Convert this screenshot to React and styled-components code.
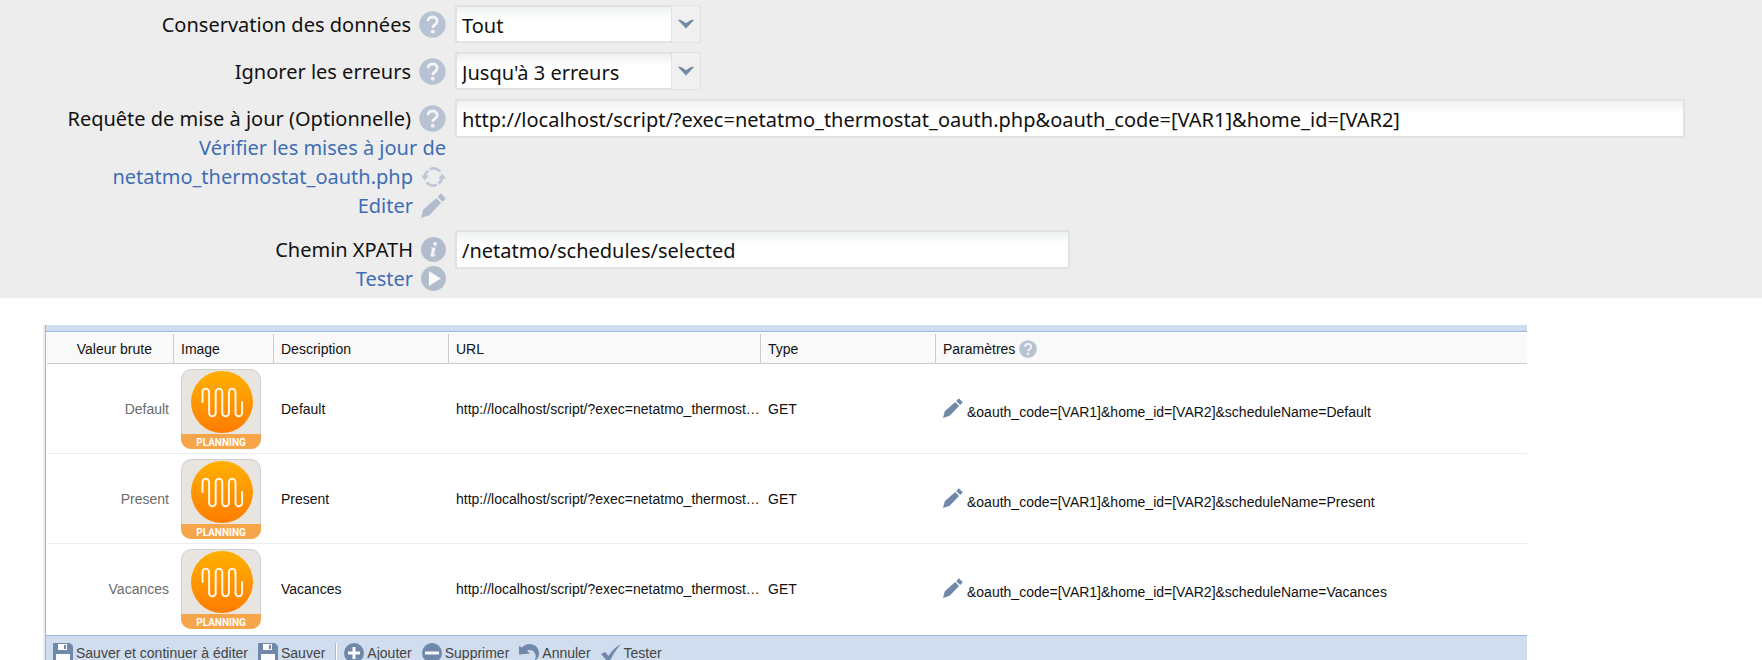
import React from "react";
import styled, { createGlobalStyle } from "styled-components";

const GlobalStyle = createGlobalStyle`
  * {
    box-sizing: border-box;
  }

  body {
    margin: 0;
    background: #fff;
  }
`;

const Page = styled.main`
  height: 100vh;
  overflow: hidden;
`;

const Settings = styled.form`
  display: grid;
  grid-template-columns: 446px 1fr;
  column-gap: 9px;
  row-gap: 9px;
  align-items: start;
  padding: 5px 77px 4px 0;
  background: #ededed;
  color: #111;
  font-family: "Noto Sans", Tahoma, sans-serif;
  font-size: 20px;
  line-height: 29px;
`;

const LabelCell = styled.div`
  display: flex;
  flex-direction: column;
  align-items: flex-end;
  padding: 5px 0 1px;
  text-align: right;
`;

const LabelLine = styled.div`
  display: flex;
  align-items: center;
  gap: 8px;
`;

const ActionLink = styled.a`
  display: flex;
  align-items: center;
  gap: 8px;
  color: #3f6db5;
  text-decoration: none;
`;

const ActionBlock = styled.a`
  display: flex;
  flex-direction: column;
  align-items: flex-end;
  color: #3f6db5;
  text-decoration: none;
`;

const TextInput = styled.input`
  width: ${(props) => (props.$half ? "50%" : "100%")};
  height: 39px;
  padding: 2px 5px 0;
  border: 2px solid #e0e2e3;
  border-radius: 0;
  background: linear-gradient(#eef1f1, #fff 12px);
  color: #111;
  font: inherit;
  outline: none;
`;

const SelectBox = styled.div`
  display: grid;
  width: 246px;
  height: 38px;

  & > * {
    grid-area: 1 / 1;
  }
`;

const Select = styled.select`
  appearance: none;
  width: 100%;
  height: 38px;
  padding: 2px 34px 0 5px;
  border: 2px solid #e0e2e3;
  border-radius: 0 4px 0 0;
  background: linear-gradient(#eef1f1, #fff 12px);
  color: #111;
  font: inherit;
  outline: none;
`;

const Arrow = styled.span`
  display: flex;
  justify-content: center;
  justify-self: end;
  width: 30px;
  padding-top: 13px;
  border: 1px solid #dfe1e3;
  border-radius: 0 4px 0 0;
  background: #f0f0f0;
  pointer-events: none;
`;

const Panel = styled.section`
  margin: 27px 235px 0 43px;
  border-left: 2px solid #ececec;
  font-family: "Liberation Sans", Arial, sans-serif;
  font-size: 14px;
  line-height: 18px;
`;

const PanelBody = styled.div`
  border-left: 1px solid #99b8e4;
`;

const Band = styled.div`
  height: 7px;
  border-bottom: 1px solid #99b8e4;
  background: #d0ddee;
`;

const Table = styled.table`
  width: 100%;
  padding: 2px 0 1px 1px;
  border-collapse: separate;
  border-spacing: 0;
  table-layout: fixed;
  color: #111;
`;

const HeadCell = styled.th`
  width: ${(props) => (props.$width ? `${props.$width}px` : "auto")};
  height: 30px;
  padding: 0 ${(props) => (props.$align ? 21 : 0)}px 0 7px;
  border-right: ${(props) => (props.$width ? "1px solid #ccc" : "none")};
  border-bottom: 1px solid #ccc;
  background: #f9f9f9;
  font-weight: normal;
  text-align: ${(props) => props.$align || "left"};
`;

const HeadLabel = styled.span`
  display: flex;
  align-items: center;
  gap: 4px;
`;

const Cell = styled.td`
  height: 90px;
  padding: 0 0 0 7px;
  border-bottom: 1px solid #ededed;
  white-space: nowrap;

  tr:last-child > & {
    border-bottom-color: #fff;
  }
`;

const RawCell = styled(Cell)`
  padding-right: 5px;
  color: #6c6c6c;
  text-align: right;
`;

const ImageCell = styled(Cell)`
  & svg {
    display: block;
  }
`;

const Params = styled.div`
  display: flex;
  align-items: flex-end;
  gap: 4px;
  padding-top: 2px;
`;

const EditButton = styled.button`
  display: flex;
  padding: 0 0 3px;
  border: 0;
  background: none;
  cursor: pointer;
`;

const Toolbar = styled.div`
  display: flex;
  align-items: flex-start;
  gap: 10px;
  height: 36px;
  padding: 7px 7px 0;
  border-top: 1px solid #99b8e4;
  background: #d0ddee;
`;

const ToolButton = styled.button`
  display: flex;
  align-items: center;
  gap: 3px;
  padding: 0;
  border: 0;
  background: none;
  color: #444;
  font: inherit;
  cursor: pointer;
`;

const Separator = styled.span`
  width: 2px;
  height: 22px;
  margin-right: -3px;
  border-left: 1px solid #98c0f0;
  border-right: 1px solid #fff;
`;

const MUTED = "#b1bccd";
const STEEL = "#7088a9";

const HelpIcon = ({ size = 27 }) => (
  <svg width={size} height={size} viewBox="0 0 27 27">
    <circle cx="13.5" cy="13.5" r="13.2" fill="#b7c2d3" />
    <path
      d="M9 10.2C9 7.6 11 6 13.6 6s4.6 1.5 4.6 3.9c0 2.1-1.3 3-2.6 4-1.1.8-1.7 1.4-1.7 3"
      fill="none"
      stroke="#f2f4f7"
      strokeWidth="2.8"
    />
    <circle cx="13.8" cy="20.7" r="1.9" fill="#f2f4f7" />
  </svg>
);

const InfoIcon = () => (
  <svg width="25" height="25" viewBox="0 0 27 27">
    <circle cx="13.5" cy="13.5" r="13.5" fill={MUTED} />
    <circle cx="15.3" cy="7.4" r="2.1" fill="#f2f4f7" />
    <path
      d="M10.8 11.4h5.1l-2 7.2c-.2.8.4.8 1.9-.2l.3.7c-1.6 1.5-3 2.2-4.2 2.2-1.5 0-1.9-1-1.5-2.5l1.5-5.5c.2-.7-.1-.9-1.3-.9z"
      fill="#f2f4f7"
    />
  </svg>
);

const PlayIcon = () => (
  <svg width="25" height="25" viewBox="0 0 27 27">
    <circle cx="13.5" cy="13.5" r="13.5" fill={MUTED} />
    <path d="M8.5 5.5L21.5 13.5L8.5 21.5z" fill="#fafafa" />
  </svg>
);

const RefreshIcon = () => (
  <svg width="25" height="22" viewBox="0 0 25 22">
    <g fill="none" stroke="#bfc8d5" strokeWidth="2.6">
      <path d="M3.8 10.5a8.7 8.7 0 0 1 3.6-6M9 3.2a8.8 8.8 0 0 1 10.2 2.4" />
      <path d="M21.2 11.5a8.7 8.7 0 0 1-3.6 6M16 18.8a8.8 8.8 0 0 1-10.2-2.4" />
    </g>
    <path d="M0 9.5h7.8l-4 5zM25 12.5h-7.8l4-5z" fill="#bfc8d5" />
  </svg>
);

const PencilIcon = ({ size, color }) => (
  <svg width={size} height={size} viewBox="0 0 20 20">
    <path
      d="M0 20l1.8-6.8L12.2 4.1l3.9 3.8L6.6 17.800zM13.3 3.2L15.500.6c.3-.2.6-.1.8.1l3.2 3.200c.3.3.3.6 0 .9l-2.300 2.200z"
      fill={color}
    />
  </svg>
);

const ChevronIcon = () => (
  <svg width="16" height="10" viewBox="0 0 16 10">
    <path d="M0 1C3 0 5 2.500 8 4.300 11 2.500 13 0 16 1L8 9.500z" fill={STEEL} />
  </svg>
);

const SaveIcon = () => (
  <svg width="20" height="20" viewBox="0 0 20 20">
    <path d="M0 1a1 1 0 0 1 1-1h16l3 3v17H0z" fill={STEEL} />
    <path d="M5 1h9v6H5zM3 11h14v9H3z" fill="#fbfcfe" />
    <path d="M11 2h2v4h-2z" fill={STEEL} />
  </svg>
);

const RoundIcon = ({ plus }) => (
  <svg width="20" height="20" viewBox="0 0 20 20">
    <circle cx="10" cy="10" r="10" fill={STEEL} />
    <path
      d={plus ? "M4 10h12M10 4v12" : "M3 10h14"}
      stroke="#fbfcfe"
      strokeWidth="3"
    />
  </svg>
);

const UndoIcon = () => (
  <svg width="20" height="20" viewBox="0 0 20 20">
    <path
      d="M0 3l3 1.500C6 1.700 9 .8 12 1.200c5 .6 8 4.600 8 9 0 3.600-2 6.500-4.600 7.800 1.500-2.600 1.800-5 .6-7.500-1.400-3-4.500-4.100-8-3L11 10.500 0 11.500z"
      fill={STEEL}
    />
  </svg>
);

const CheckIcon = () => (
  <svg width="20" height="20" viewBox="0 0 20 20">
    <path
      d="M0 11l4-1.900 3.500 4C10.500 8 14.500 4 20 1.200 15.500 6 11.500 12 9 18H6z"
      fill={STEEL}
    />
  </svg>
);

const PlanningImage = ({ id }) => (
  <svg width="80" height="80" viewBox="0 0 80 80" role="img" aria-label="Planning">
    <defs>
      <linearGradient id={`sun-${id}`} x1="0" y1="0" x2="0" y2="1">
        <stop offset="0" stopColor="#ffb000" />
        <stop offset="1" stopColor="#ff7d00" />
      </linearGradient>
      <clipPath id={`tile-${id}`}>
        <rect width="80" height="80" rx="10" />
      </clipPath>
    </defs>
    <g clipPath={`url(#tile-${id})`}>
      <rect width="80" height="80" fill="#e8e5e1" />
      <rect x=".5" y=".5" width="79" height="79" rx="10" fill="none" stroke="#d0cfcf" />
      <rect y="65" width="80" height="15" fill="#f7a54a" />
    </g>
    <circle cx="41" cy="33" r="31" fill={`url(#sun-${id})`} />
    <path
      d="M21.500 33V23a3.300 3.300 0 0 1 6.600 0V44a3.300 3.300 0 0 0 6.600 0V23a3.300 3.300 0 0 1 6.600 0V44a3.300 3.300 0 0 0 6.600 0V23a3.300 3.300 0 0 1 6.600 0V44a3.300 3.300 0 0 0 6.600 0V33"
      fill="none"
      stroke="#fff6e6"
      strokeWidth="2"
      strokeLinecap="round"
    />
    <text
      x="40"
      y="77"
      fill="#fff"
      fontFamily="Roboto, sans-serif"
      fontSize="10"
      fontWeight="bold"
      textAnchor="middle"
    >
      PLANNING
    </text>
  </svg>
);

const schedules = ["Default", "Present", "Vacances"];

export default function App() {
  return (
    <Page>
      <GlobalStyle />
      <Settings>
        <LabelCell>
          <LabelLine>
            <label htmlFor="keep">Conservation des données</label>
            <HelpIcon />
          </LabelLine>
        </LabelCell>
        <SelectBox>
          <Select id="keep" defaultValue="Tout">
            <option>Tout</option>
          </Select>
          <Arrow>
            <ChevronIcon />
          </Arrow>
        </SelectBox>

        <LabelCell>
          <LabelLine>
            <label htmlFor="errors">Ignorer les erreurs</label>
            <HelpIcon />
          </LabelLine>
        </LabelCell>
        <SelectBox>
          <Select id="errors" defaultValue="Jusqu'à 3 erreurs">
            <option>Jusqu'à 3 erreurs</option>
          </Select>
          <Arrow>
            <ChevronIcon />
          </Arrow>
        </SelectBox>

        <LabelCell>
          <LabelLine>
            <label htmlFor="request">Requête de mise à jour (Optionnelle)</label>
            <HelpIcon />
          </LabelLine>
          <ActionBlock href="#update">
            <span>Vérifier les mises à jour de</span>
            <LabelLine>
              netatmo_thermostat_oauth.php
              <RefreshIcon />
            </LabelLine>
          </ActionBlock>
          <ActionLink href="#edit">
            Editer
            <PencilIcon size={25} color={MUTED} />
          </ActionLink>
        </LabelCell>
        <TextInput
          id="request"
          defaultValue="http://localhost/script/?exec=netatmo_thermostat_oauth.php&oauth_code=[VAR1]&home_id=[VAR2]"
        />

        <LabelCell>
          <LabelLine>
            <label htmlFor="xpath">Chemin XPATH</label>
            <InfoIcon />
          </LabelLine>
          <ActionLink href="#test">
            Tester
            <PlayIcon />
          </ActionLink>
        </LabelCell>
        <TextInput id="xpath" $half defaultValue="/netatmo/schedules/selected" />
      </Settings>

      <Panel>
        <PanelBody>
          <Band />
          <Table>
            <thead>
              <tr>
                <HeadCell $width={127} $align="right">Valeur brute</HeadCell>
                <HeadCell $width={100}>Image</HeadCell>
                <HeadCell $width={175}>Description</HeadCell>
                <HeadCell $width={312}>URL</HeadCell>
                <HeadCell $width={175}>Type</HeadCell>
                <HeadCell>
                  <HeadLabel>
                    Paramètres
                    <HelpIcon size={18} />
                  </HeadLabel>
                </HeadCell>
              </tr>
            </thead>
            <tbody>
              {schedules.map((name) => (
                <tr key={name}>
                  <RawCell>{name}</RawCell>
                  <ImageCell>
                    <PlanningImage id={name} />
                  </ImageCell>
                  <Cell>{name}</Cell>
                  <Cell>http://localhost/script/?exec=netatmo_thermost…</Cell>
                  <Cell>GET</Cell>
                  <Cell>
                    <Params>
                      <EditButton type="button" aria-label="Editer">
                        <PencilIcon size={20} color={STEEL} />
                      </EditButton>
                      &oauth_code=[VAR1]&home_id=[VAR2]&scheduleName={name}
                    </Params>
                  </Cell>
                </tr>
              ))}
            </tbody>
          </Table>
          <Toolbar>
            <ToolButton>
              <SaveIcon />
              Sauver et continuer à éditer
            </ToolButton>
            <ToolButton>
              <SaveIcon />
              Sauver
            </ToolButton>
            <Separator />
            <ToolButton>
              <RoundIcon plus />
              Ajouter
            </ToolButton>
            <ToolButton>
              <RoundIcon />
              Supprimer
            </ToolButton>
            <ToolButton>
              <UndoIcon />
              Annuler
            </ToolButton>
            <ToolButton>
              <CheckIcon />
              Tester
            </ToolButton>
          </Toolbar>
        </PanelBody>
      </Panel>
    </Page>
  );
}
